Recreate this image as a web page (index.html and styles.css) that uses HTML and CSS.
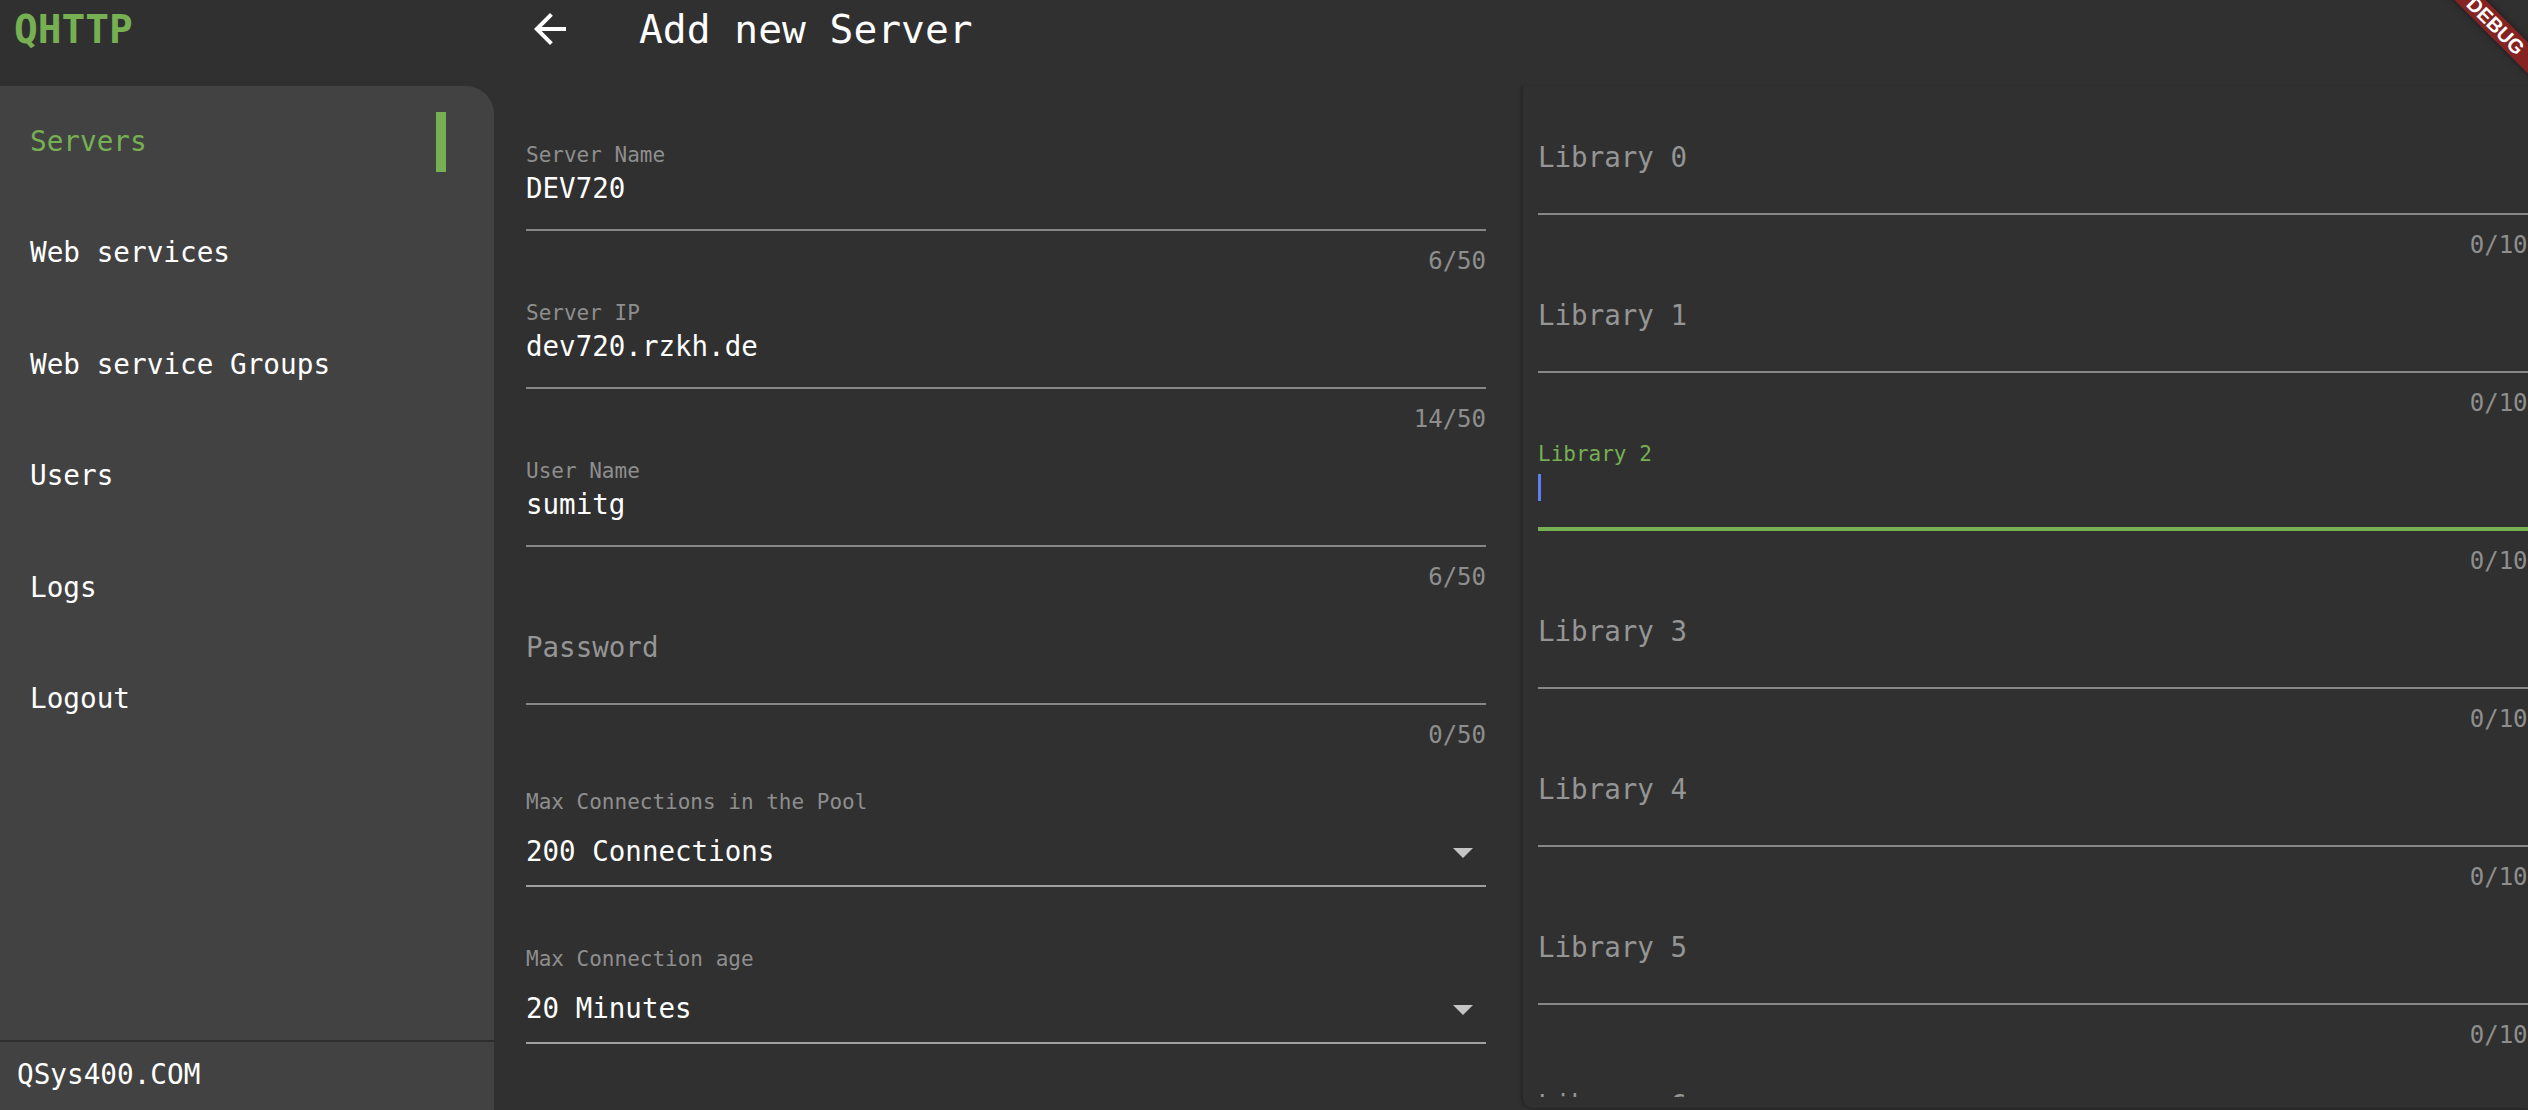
FILE: index.html
```html
<!DOCTYPE html>
<html lang="en">
<head>
<meta charset="utf-8">
<title>QHTTP - Add new Server</title>
<link rel="stylesheet" href="styles.css">
</head>
<body>
<div class="app">
  <header class="topbar">
    <div class="brand">QHTTP</div>
    <button class="back" aria-label="Back">
      <svg viewBox="0 0 24 24" width="48" height="48"><path fill="#ffffff" d="M20 11H7.83l5.59-5.59L12 4l-8 8 8 8 1.41-1.41L7.83 13H20v-2z"/></svg>
    </button>
    <h1 class="title">Add new Server</h1>
  </header>
  <div class="content">
    <aside class="sidebar">
      <nav class="nav">
        <a class="nav-item active">Servers<span class="indicator"></span></a>
        <a class="nav-item">Web services</a>
        <a class="nav-item">Web service Groups</a>
        <a class="nav-item">Users</a>
        <a class="nav-item">Logs</a>
        <a class="nav-item">Logout</a>
      </nav>
      <div class="sidebar-footer">QSys400.COM</div>
    </aside>
    <main class="main">
      <section class="form-left">
        <div class="field">
          <div class="field-body"><div class="label">Server Name</div><div class="value">DEV720</div></div>
          <div class="line"></div>
          <div class="counter">6/50</div>
        </div>
        <div class="field">
          <div class="field-body"><div class="label">Server IP</div><div class="value">dev720.rzkh.de</div></div>
          <div class="line"></div>
          <div class="counter">14/50</div>
        </div>
        <div class="field">
          <div class="field-body"><div class="label">User Name</div><div class="value">sumitg</div></div>
          <div class="line"></div>
          <div class="counter">6/50</div>
        </div>
        <div class="field">
          <div class="field-body"><div class="placeholder">Password</div></div>
          <div class="line"></div>
          <div class="counter">0/50</div>
        </div>
        <div class="dropdown">
          <div class="label">Max Connections in the Pool</div>
          <div class="dropdown-value"><span>200 Connections</span><span class="arrow"></span></div>
          <div class="line"></div>
        </div>
        <div class="dropdown">
          <div class="label">Max Connection age</div>
          <div class="dropdown-value"><span>20 Minutes</span><span class="arrow"></span></div>
          <div class="line"></div>
        </div>
      </section>
      <section class="form-right">
        <div class="form-scroll">
          <div class="field">
            <div class="field-body"><div class="placeholder">Library 0</div></div>
            <div class="line"></div>
            <div class="counter">0/100</div>
          </div>
          <div class="field">
            <div class="field-body"><div class="placeholder">Library 1</div></div>
            <div class="line"></div>
            <div class="counter">0/100</div>
          </div>
          <div class="field focused">
            <div class="field-body"><div class="label">Library 2</div><div class="value"><span class="cursor"></span></div></div>
            <div class="line"></div>
            <div class="counter">0/100</div>
          </div>
          <div class="field">
            <div class="field-body"><div class="placeholder">Library 3</div></div>
            <div class="line"></div>
            <div class="counter">0/100</div>
          </div>
          <div class="field">
            <div class="field-body"><div class="placeholder">Library 4</div></div>
            <div class="line"></div>
            <div class="counter">0/100</div>
          </div>
          <div class="field">
            <div class="field-body"><div class="placeholder">Library 5</div></div>
            <div class="line"></div>
            <div class="counter">0/100</div>
          </div>
          <div class="field">
            <div class="field-body"><div class="placeholder">Library 6</div></div>
            <div class="line"></div>
            <div class="counter">0/100</div>
          </div>
        </div>
      </section>
    </main>
  </div>
  <div class="debug-banner">DEBUG</div>
</div>
</body>
</html>
```
FILE: styles.css
```css
html, body {
  margin: 0;
  padding: 0;
}
body {
  background: #303030;
  color: #ffffff;
  font-family: "DejaVu Sans Mono", "Liberation Mono", monospace;
  overflow: hidden;
}
.app {
  position: relative;
  width: 2528px;
  height: 1110px;
  display: flex;
  flex-direction: column;
  overflow: hidden;
}

/* top bar */
.topbar {
  height: 58px;
  flex-shrink: 0;
  display: flex;
  align-items: center;
}
.brand {
  width: 494px;
  box-sizing: border-box;
  padding-left: 14px;
  font-size: 39.5px;
  line-height: 40px;
  font-weight: bold;
  color: #76b052;
}
.back {
  width: 48px;
  height: 48px;
  margin-left: 32px;
  padding: 0;
  border: 0;
  background: transparent;
  display: flex;
}
.title {
  margin: 0 0 0 65px;
  font-size: 39.6px;
  line-height: 40px;
  font-weight: normal;
  color: #ffffff;
}

/* body */
.content {
  flex: 1;
  display: flex;
  min-height: 0;
}
.sidebar {
  width: 494px;
  flex-shrink: 0;
  margin-top: 28px;
  background: #424242;
  border-top-right-radius: 28px;
  display: flex;
  flex-direction: column;
}
.nav {
  flex: 1;
  display: flex;
  flex-direction: column;
}
.nav-item {
  height: 111.5px;
  display: flex;
  align-items: center;
  padding: 0 48px 0 30px;
  font-size: 27.7px;
  line-height: 28px;
  color: #ffffff;
}
.nav-item.active {
  color: #76b052;
}
.indicator {
  margin-left: auto;
  width: 10px;
  height: 60px;
  background: #76b052;
}
.sidebar-footer {
  height: 70px;
  flex-shrink: 0;
  box-sizing: border-box;
  padding: 0 0 3px 17px;
  border-top: 2px solid #2e2e2e;
  display: flex;
  align-items: center;
  font-size: 27.7px;
  line-height: 28px;
}

.main {
  flex: 1;
  display: flex;
  min-width: 0;
}
.form-left {
  width: 1028px;
  flex-shrink: 0;
  box-sizing: border-box;
  padding: 86.5px 36px 0 32px;
  display: flex;
  flex-direction: column;
}
.form-right {
  flex: 1;
  min-width: 0;
  margin-top: 28px;
  margin-bottom: 2px;
  padding-bottom: 11px;
  border-left: 1px solid #272727;
  border-bottom-left-radius: 10px;
  box-shadow: -1px 1px 3px rgba(0, 0, 0, 0.25);
  display: flex;
  flex-direction: column;
  overflow: hidden;
}
.form-scroll {
  flex: 1;
  min-height: 0;
  padding: 42px 0 0 15px;
  display: flex;
  flex-direction: column;
  overflow: hidden;
}
.form-scroll .field {
  flex-shrink: 0;
  margin-right: -14px;
}

/* fields */
.field {
  margin-bottom: 29.5px;
}
.field-body {
  height: 84.5px;
  display: flex;
  flex-direction: column;
}
.label {
  height: 21px;
  font-size: 21px;
  line-height: 21px;
  color: #8e8e8e;
  white-space: nowrap;
}
.value {
  height: 28px;
  margin-top: 8px;
  font-size: 27.5px;
  line-height: 28px;
  color: #ffffff;
  display: flex;
  align-items: center;
}
.placeholder {
  margin-top: 14.5px;
  font-size: 27.5px;
  line-height: 28px;
  color: #959595;
  white-space: nowrap;
}
.line {
  height: 2px;
  flex-shrink: 0;
  background: #868686;
}
.counter {
  margin-top: 18px;
  font-size: 24px;
  line-height: 24px;
  text-align: right;
  color: #8e8e8e;
}
.focused .label {
  color: #76b052;
}
.focused .line {
  height: 3.5px;
  margin-top: -1.5px;
  background: #76b052;
}
.cursor {
  width: 3px;
  height: 27px;
  background: #5f7ff0;
}

/* dropdowns */
.dropdown {
  margin-top: 15.5px;
  margin-bottom: 46.5px;
}
.dropdown-value {
  height: 28px;
  margin-top: 24px;
  display: flex;
  align-items: center;
  justify-content: space-between;
  font-size: 27.5px;
  line-height: 28px;
  color: #ffffff;
}
.arrow {
  width: 0;
  height: 0;
  margin-top: 4px;
  margin-right: 13px;
  border-left: 10px solid transparent;
  border-right: 10px solid transparent;
  border-top: 10px solid #c4c4c4;
}
.dropdown .line {
  margin-top: 20px;
  background: #a0a0a0;
}

/* debug ribbon */
.debug-banner {
  position: absolute;
  left: 2415px;
  top: 19px;
  width: 170px;
  height: 22px;
  box-sizing: border-box;
  padding-right: 12px;
  transform: rotate(45deg);
  background: rgba(183, 28, 28, 0.63);
  box-shadow: 0 0 6px rgba(0, 0, 0, 0.5);
  color: #ffffff;
  font-family: "Liberation Sans", Arial, sans-serif;
  font-weight: bold;
  font-size: 20px;
  line-height: 22px;
  text-align: center;
}
```
